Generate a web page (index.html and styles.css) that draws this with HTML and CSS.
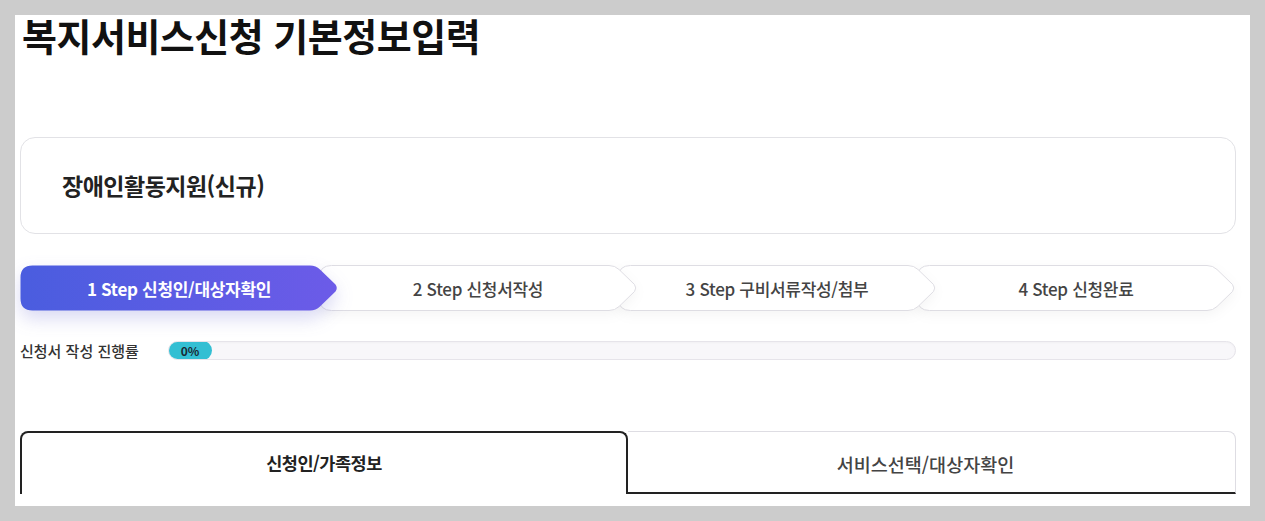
FILE: index.html
```html
<!DOCTYPE html>
<html lang="ko">
<head>
  <meta charset="UTF-8" />
  <title>복지서비스신청 기본정보입력</title>
  <link rel="stylesheet" href="styles.css">
</head>
<body>

  <div id="page">
    <h1 class="title">복지서비스신청 기본정보입력</h1>

    <div class="service-box">
      <strong>장애인활동지원(신규)</strong>
    </div>

    <ol class="steps">
      <li class="step active">
        <svg class="step-bg" width="318" height="46" viewBox="0 0 318 46">
          <defs>
            <linearGradient id="stepGrad" x1="0" y1="0" x2="1" y2="0">
              <stop offset="0" stop-color="#4a5ddf" />
              <stop offset="1" stop-color="#6c5be8" />
            </linearGradient>
          </defs>
          <path d="M12.5,0.5 H290 Q296,0.5 300,4.5 L315.5,19.5 Q318,23 315.5,26.5 L300,41.5 Q296,45.5 290,45.5 H12.5 Q0.5,45.5 0.5,33.5 V12.5 Q0.5,0.5 12.5,0.5 Z" />
        </svg>
        <span>1 Step 신청인/대상자확인</span>
      </li>
      <li class="step">
        <svg class="step-bg" width="318" height="46" viewBox="0 0 318 46">
          <path d="M12.5,0.5 H290 Q296,0.5 300,4.5 L315.5,19.5 Q318,23 315.5,26.5 L300,41.5 Q296,45.5 290,45.5 H12.5 Q0.5,45.5 0.5,33.5 V12.5 Q0.5,0.5 12.5,0.5 Z" />
        </svg>
        <span>2 Step 신청서작성</span>
      </li>
      <li class="step">
        <svg class="step-bg" width="318" height="46" viewBox="0 0 318 46">
          <path d="M12.5,0.5 H290 Q296,0.5 300,4.5 L315.5,19.5 Q318,23 315.5,26.5 L300,41.5 Q296,45.5 290,45.5 H12.5 Q0.5,45.5 0.5,33.5 V12.5 Q0.5,0.5 12.5,0.5 Z" />
        </svg>
        <span>3 Step 구비서류작성/첨부</span>
      </li>
      <li class="step">
        <svg class="step-bg" width="318" height="46" viewBox="0 0 318 46">
          <path d="M12.5,0.5 H290 Q296,0.5 300,4.5 L315.5,19.5 Q318,23 315.5,26.5 L300,41.5 Q296,45.5 290,45.5 H12.5 Q0.5,45.5 0.5,33.5 V12.5 Q0.5,0.5 12.5,0.5 Z" />
        </svg>
        <span>4 Step 신청완료</span>
      </li>
    </ol>

    <div class="progress-row">
      <span class="progress-label">신청서 작성 진행률</span>
      <div class="progress-track">
        <div class="progress-fill" style="width: 44px">0%</div>
      </div>
    </div>

    <div class="tabs">
      <button class="tab on">신청인/가족정보</button>
      <button class="tab">서비스선택/대상자확인</button>
    </div>
  </div>

</body>
</html>
```

FILE: styles.css
```css
body {
  margin: 0;
  padding: 15px;
  background-color: #cccccc;
  font-family: "Noto Sans CJK KR", "Noto Sans", sans-serif;
  color: #222;
}

#page {
  width: 1235px;
  height: 491px;
  overflow: hidden;
  background-color: #fff;
  box-sizing: border-box;
  padding: 0 14px 0 5px;
}

.title {
  margin: 0 0 0 2px;
  font-size: 38px;
  font-weight: 700;
  line-height: 40px;
  letter-spacing: -0.5px;
  color: #111;
}

.service-box {
  margin-top: 82px;
  height: 97px;
  box-sizing: border-box;
  border: 1px solid #e2e2e6;
  border-radius: 15px;
  display: flex;
  align-items: center;
  padding: 0 0 2px 41px;
}

.service-box strong {
  font-size: 23px;
  font-weight: 700;
  letter-spacing: -0.5px;
  color: #222;
}

.steps {
  list-style: none;
  margin: 31px 0 0;
  padding: 0;
  display: flex;
}

.step {
  position: relative;
  flex-shrink: 0;
  width: 318px;
  height: 46px;
  margin-left: -19px;
  display: flex;
  align-items: center;
  justify-content: center;
  font-size: 17px;
  font-weight: 500;
  letter-spacing: -0.3px;
  color: #444;
}

.step:first-child {
  margin-left: 0;
  z-index: 4;
}

.step:nth-child(2) { z-index: 3; }
.step:nth-child(3) { z-index: 2; }
.step:nth-child(4) { z-index: 1; }

.step-bg {
  position: absolute;
  left: 0;
  top: 0;
  filter: drop-shadow(0 4px 6px rgba(0, 0, 0, 0.04));
}

.step-bg path {
  fill: #fff;
  stroke: #dedde3;
  stroke-width: 1;
}

.step.active .step-bg {
  filter: drop-shadow(0 8px 9px rgba(80, 80, 200, 0.22));
}

.step.active .step-bg path {
  fill: url(#stepGrad);
  stroke: none;
}

.step span {
  position: relative;
  margin-top: 1px;
}

.step.active {
  color: #fff;
  font-weight: 700;
}

.progress-row {
  display: flex;
  align-items: center;
  margin-top: 29px;
}

.progress-label {
  width: 148px;
  font-size: 15px;
  font-weight: 500;
  color: #333;
}

.progress-track {
  flex: 1;
  height: 19px;
  box-sizing: border-box;
  border: 1px solid #e6e4ea;
  border-radius: 10px;
  background-color: #f8f7fa;
  box-shadow: inset 0 1px 2px rgba(0, 0, 0, 0.03);
  overflow: hidden;
  display: flex;
}

.progress-fill {
  background-color: #33bfd3;
  border-radius: 10px;
  margin: -1px 0 -1px -1px;
  font-size: 12px;
  font-weight: 700;
  color: #1a2a33;
  display: flex;
  align-items: center;
  justify-content: center;
}

.tabs {
  display: flex;
  margin-top: 70px;
}

.tab {
  flex: none;
  width: 50%;
  box-sizing: border-box;
  height: 63px;
  background: #fff;
  font-family: inherit;
  font-size: 18.5px;
  font-weight: 500;
  color: #444;
  border: 1px solid #dedde3;
  border-left: none;
  border-bottom: 2px solid #222;
  border-radius: 0 8px 0 0;
  padding: 4px 12px 0 0;
  cursor: pointer;
}

.tab.on {
  border: 2px solid #222;
  border-bottom: none;
  border-radius: 8px 8px 0 0;
  padding: 0 0 2px;
  font-size: 17.5px;
  font-weight: 700;
  letter-spacing: -0.5px;
  color: #222;
}
```
